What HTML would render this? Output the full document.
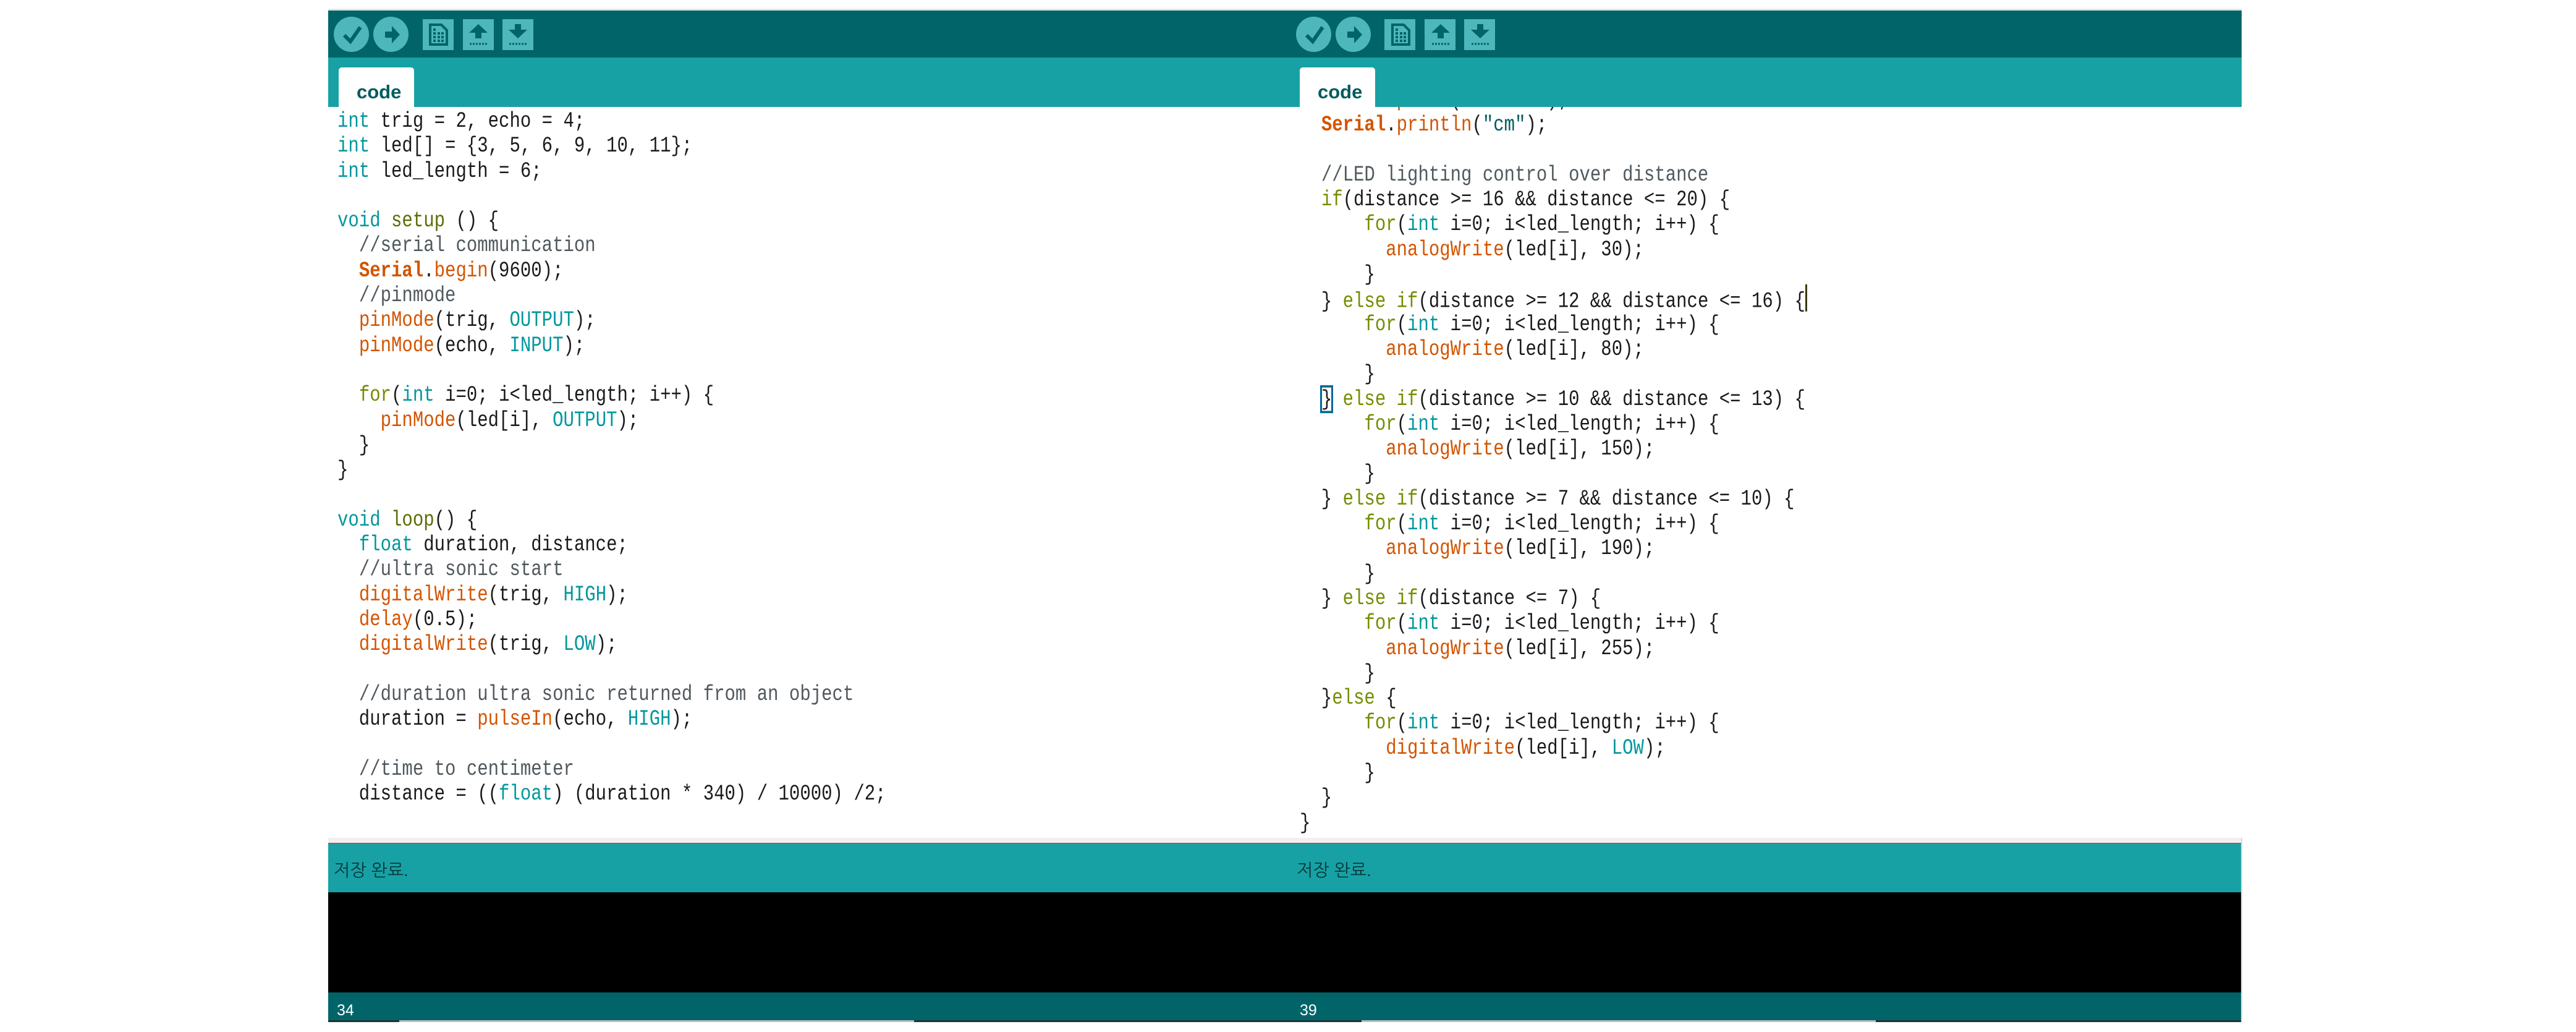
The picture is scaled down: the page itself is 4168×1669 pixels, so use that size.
<!DOCTYPE html>
<html><head><meta charset="utf-8"><style>
*{margin:0;padding:0;box-sizing:border-box}
body{width:4168px;height:1669px;background:#fff;position:relative;overflow:hidden;font-family:"Liberation Sans",sans-serif}
.a{position:absolute}
.tb{background:#006468}
.bar{background:#17a1a5}
.circ{position:absolute;width:57px;height:57px;border-radius:50%;background:#4db7bb;top:27px}
.sq{position:absolute;width:50px;height:50px;background:#4db7bb;top:31px}
.tab{position:absolute;top:109px;width:122px;height:64px;background:#fff;border-radius:5px 5px 0 0;font-weight:bold;font-size:31px;color:#005c5f;padding:22px 0 0 29px}
.code{position:absolute;top:173px;height:1182px;overflow:hidden;background:#fff}
.in{position:absolute;font-family:"Liberation Mono",monospace;font-size:29px;color:#1a1a1a}
.l{height:40.3px;line-height:40px;white-space:pre;transform:scaleY(1.22);transform-origin:0 28px}
.k{color:#00979c}.f{color:#d35400}.s{color:#d35400;font-weight:bold}.c{color:#50595e}.o{color:#5e6d03}.st{color:#728e00}.q{color:#005c5f}
.stat{font-family:"Liberation Sans","NanumGothic","Noto Sans CJK KR",sans-serif;font-size:28px;color:#06393b}
.num{font-size:25px;color:#fff}
</style></head><body>
<div class="a" style="left:531px;top:14px;width:3096px;height:3px;background:#e6e6e6"></div>
<div class="a tb" style="left:531px;top:17px;width:3096px;height:76px"></div>
<div class="a bar" style="left:531px;top:93px;width:3096px;height:80px"></div>

<div class="circ" style="left:540px"></div>
<div class="circ" style="left:604px"></div>
<div class="sq" style="left:684px"></div>
<div class="sq" style="left:749px"></div>
<div class="sq" style="left:813px"></div>
<div class="circ" style="left:2097px"></div>
<div class="circ" style="left:2161px"></div>
<div class="sq" style="left:2240px"></div>
<div class="sq" style="left:2305px"></div>
<div class="sq" style="left:2369px"></div>

<svg class="a" style="left:0;top:0" width="4168" height="100">
<g id="ic" fill="#006468" stroke="#006468">
<path d="M557 57 L567 67 L583 44" fill="none" stroke-width="6"/>
<path d="M623 51 H634 V42 L647 56 L634 70 V61 H623 Z" stroke="none"/>
<path d="M696 40 H714 L723 49 V72 H696 Z" fill="none" stroke-width="4"/>
<path d="M701 46h4v4h-4zM708 52h4v4h-4zM714 52h4v4h-4zM701 52h4v4h-4zM701 58h4v4h-4zM708 58h4v4h-4zM714 58h4v4h-4zM701 64h4v4h-4zM708 64h4v4h-4zM714 64h4v4h-4z" stroke="none"/>
<path d="M774 39 L789 53 H779 V62 H769 V53 H759 Z" stroke="none"/>
<path d="M760 71 H789" stroke-width="3" stroke-dasharray="3 2" fill="none"/>
<path d="M833 39 H843 V48 H853 L838 62 L823 48 H833 Z" stroke="none"/>
<path d="M824 71 H853" stroke-width="3" stroke-dasharray="3 2" fill="none"/>
</g>
<use href="#ic" x="1557"/>
</svg>

<div class="tab" style="left:548px">code</div>
<div class="tab" style="left:2103px">code</div>

<div class="code" style="left:531px;width:1556px">
<div class="in" style="left:15px;top:5px">
<div class="l"><span class="k">int</span> trig = 2, echo = 4;</div>
<div class="l"><span class="k">int</span> led[] = {3, 5, 6, 9, 10, 11};</div>
<div class="l"><span class="k">int</span> led_length = 6;</div>
<div class="l"> </div>
<div class="l"><span class="k">void</span> <span class="o">setup</span> () {</div>
<div class="l">  <span class="c">//serial communication</span></div>
<div class="l">  <span class="s">Serial</span>.<span class="f">begin</span>(9600);</div>
<div class="l">  <span class="c">//pinmode</span></div>
<div class="l">  <span class="f">pinMode</span>(trig, <span class="k">OUTPUT</span>);</div>
<div class="l">  <span class="f">pinMode</span>(echo, <span class="k">INPUT</span>);</div>
<div class="l"> </div>
<div class="l">  <span class="st">for</span>(<span class="k">int</span> i=0; i&lt;led_length; i++) {</div>
<div class="l">    <span class="f">pinMode</span>(led[i], <span class="k">OUTPUT</span>);</div>
<div class="l">  }</div>
<div class="l">}</div>
<div class="l"> </div>
<div class="l"><span class="k">void</span> <span class="o">loop</span>() {</div>
<div class="l">  <span class="k">float</span> duration, distance;</div>
<div class="l">  <span class="c">//ultra sonic start</span></div>
<div class="l">  <span class="f">digitalWrite</span>(trig, <span class="k">HIGH</span>);</div>
<div class="l">  <span class="f">delay</span>(0.5);</div>
<div class="l">  <span class="f">digitalWrite</span>(trig, <span class="k">LOW</span>);</div>
<div class="l"> </div>
<div class="l">  <span class="c">//duration ultra sonic returned from an object</span></div>
<div class="l">  duration = <span class="f">pulseIn</span>(echo, <span class="k">HIGH</span>);</div>
<div class="l"> </div>
<div class="l">  <span class="c">//time to centimeter</span></div>
<div class="l">  distance = ((<span class="k">float</span>) (duration * 340) / 10000) /2;</div>
</div></div>

<div class="code" style="left:2087px;width:1540px">
<div class="in" style="left:16px;top:-29px">
<div class="l">  <span class="s">Serial</span>.<span class="f">print</span>(distance);</div>
<div class="l">  <span class="s">Serial</span>.<span class="f">println</span>(<span class="q">"cm"</span>);</div>
<div class="l"> </div>
<div class="l">  <span class="c">//LED lighting control over distance</span></div>
<div class="l">  <span class="st">if</span>(distance &gt;= 16 &amp;&amp; distance &lt;= 20) {</div>
<div class="l">      <span class="st">for</span>(<span class="k">int</span> i=0; i&lt;led_length; i++) {</div>
<div class="l">        <span class="f">analogWrite</span>(led[i], 30);</div>
<div class="l">      }</div>
<div class="l">  } <span class="st">else</span> <span class="st">if</span>(distance &gt;= 12 &amp;&amp; distance &lt;= 16) {<span style="display:inline-block;width:3px;height:36px;background:#3a3a00;vertical-align:-6px"></span></div>
<div class="l">      <span class="st">for</span>(<span class="k">int</span> i=0; i&lt;led_length; i++) {</div>
<div class="l">        <span class="f">analogWrite</span>(led[i], 80);</div>
<div class="l">      }</div>
<div class="l">  <span style="outline:3px solid #006699;outline-offset:-1px">}</span> <span class="st">else</span> <span class="st">if</span>(distance &gt;= 10 &amp;&amp; distance &lt;= 13) {</div>
<div class="l">      <span class="st">for</span>(<span class="k">int</span> i=0; i&lt;led_length; i++) {</div>
<div class="l">        <span class="f">analogWrite</span>(led[i], 150);</div>
<div class="l">      }</div>
<div class="l">  } <span class="st">else</span> <span class="st">if</span>(distance &gt;= 7 &amp;&amp; distance &lt;= 10) {</div>
<div class="l">      <span class="st">for</span>(<span class="k">int</span> i=0; i&lt;led_length; i++) {</div>
<div class="l">        <span class="f">analogWrite</span>(led[i], 190);</div>
<div class="l">      }</div>
<div class="l">  } <span class="st">else</span> <span class="st">if</span>(distance &lt;= 7) {</div>
<div class="l">      <span class="st">for</span>(<span class="k">int</span> i=0; i&lt;led_length; i++) {</div>
<div class="l">        <span class="f">analogWrite</span>(led[i], 255);</div>
<div class="l">      }</div>
<div class="l">  }<span class="st">else</span> {</div>
<div class="l">      <span class="st">for</span>(<span class="k">int</span> i=0; i&lt;led_length; i++) {</div>
<div class="l">        <span class="f">digitalWrite</span>(led[i], <span class="k">LOW</span>);</div>
<div class="l">      }</div>
<div class="l">  }</div>
<div class="l">}</div>
</div></div>

<div class="a" style="left:531px;top:1355px;width:3096px;height:8px;background:#f0f0f0"></div>
<div class="a" style="left:531px;top:1363px;width:3096px;height:2px;background:#b05555"></div>
<div class="a bar" style="left:531px;top:1365px;width:3096px;height:78px"></div>
<div class="a" style="left:531px;top:1443px;width:3096px;height:162px;background:#000"></div>
<div class="a tb" style="left:531px;top:1605px;width:3096px;height:45px"></div>
<div class="a" style="left:531px;top:1650px;width:3096px;height:3px;background:#1e3536"></div>
<div class="a" style="left:646px;top:1650px;width:833px;height:3px;background:#c0c0c0"></div>
<div class="a" style="left:2203px;top:1650px;width:832px;height:3px;background:#c0c0c0"></div>
<div class="a" style="left:3626px;top:1355px;width:2px;height:298px;background:#d8d8d8"></div>

<div class="a stat" style="left:540px;top:1391px">저장 완료.</div>
<div class="a stat" style="left:2098px;top:1391px">저장 완료.</div>
<div class="a num" style="left:545px;top:1620px">34</div>
<div class="a num" style="left:2103px;top:1620px">39</div>
</body></html>
